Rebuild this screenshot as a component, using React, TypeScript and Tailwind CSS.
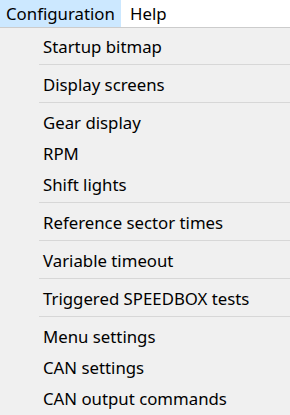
import React from "react";

type Entry = { label?: string; sep?: boolean };

const entries: Entry[] = [
  { label: "Startup bitmap" },
  { sep: true },
  { label: "Display screens" },
  { sep: true },
  { label: "Gear display" },
  { label: "RPM" },
  { label: "Shift lights" },
  { sep: true },
  { label: "Reference sector times" },
  { sep: true },
  { label: "Variable timeout" },
  { sep: true },
  { label: "Triggered SPEEDBOX tests" },
  { sep: true },
  { label: "Menu settings" },
  { label: "CAN settings" },
  { label: "CAN output commands" },
];

export default function App() {
  return (
    <div
      className="w-[290px] h-[415px] overflow-hidden bg-[#f0f0f0] text-black"
      style={{ fontFamily: '"Segoe UI", "Noto Sans", sans-serif' }}
    >
      <div className="flex h-[28px] bg-white border-b border-[#cccccc] text-[16.8px] leading-[28px]">
        <div className="pl-[6px] w-[121px] bg-[#cce8ff] whitespace-nowrap">Configuration</div>
        <div className="pl-[9px]">Help</div>
      </div>
      <div className="pt-[3px] flex flex-col">
        {entries.map((e, i) =>
          e.sep ? (
            <div key={i} className="h-[7px] pl-[39px] pt-[2px]">
              <div className="h-px bg-[#d7d7d7]" />
            </div>
          ) : (
            <div key={i} className="h-[31px] pl-[43px] text-[16.8px] leading-[31px] whitespace-nowrap">
              {e.label}
            </div>
          )
        )}
      </div>
    </div>
  );
}
